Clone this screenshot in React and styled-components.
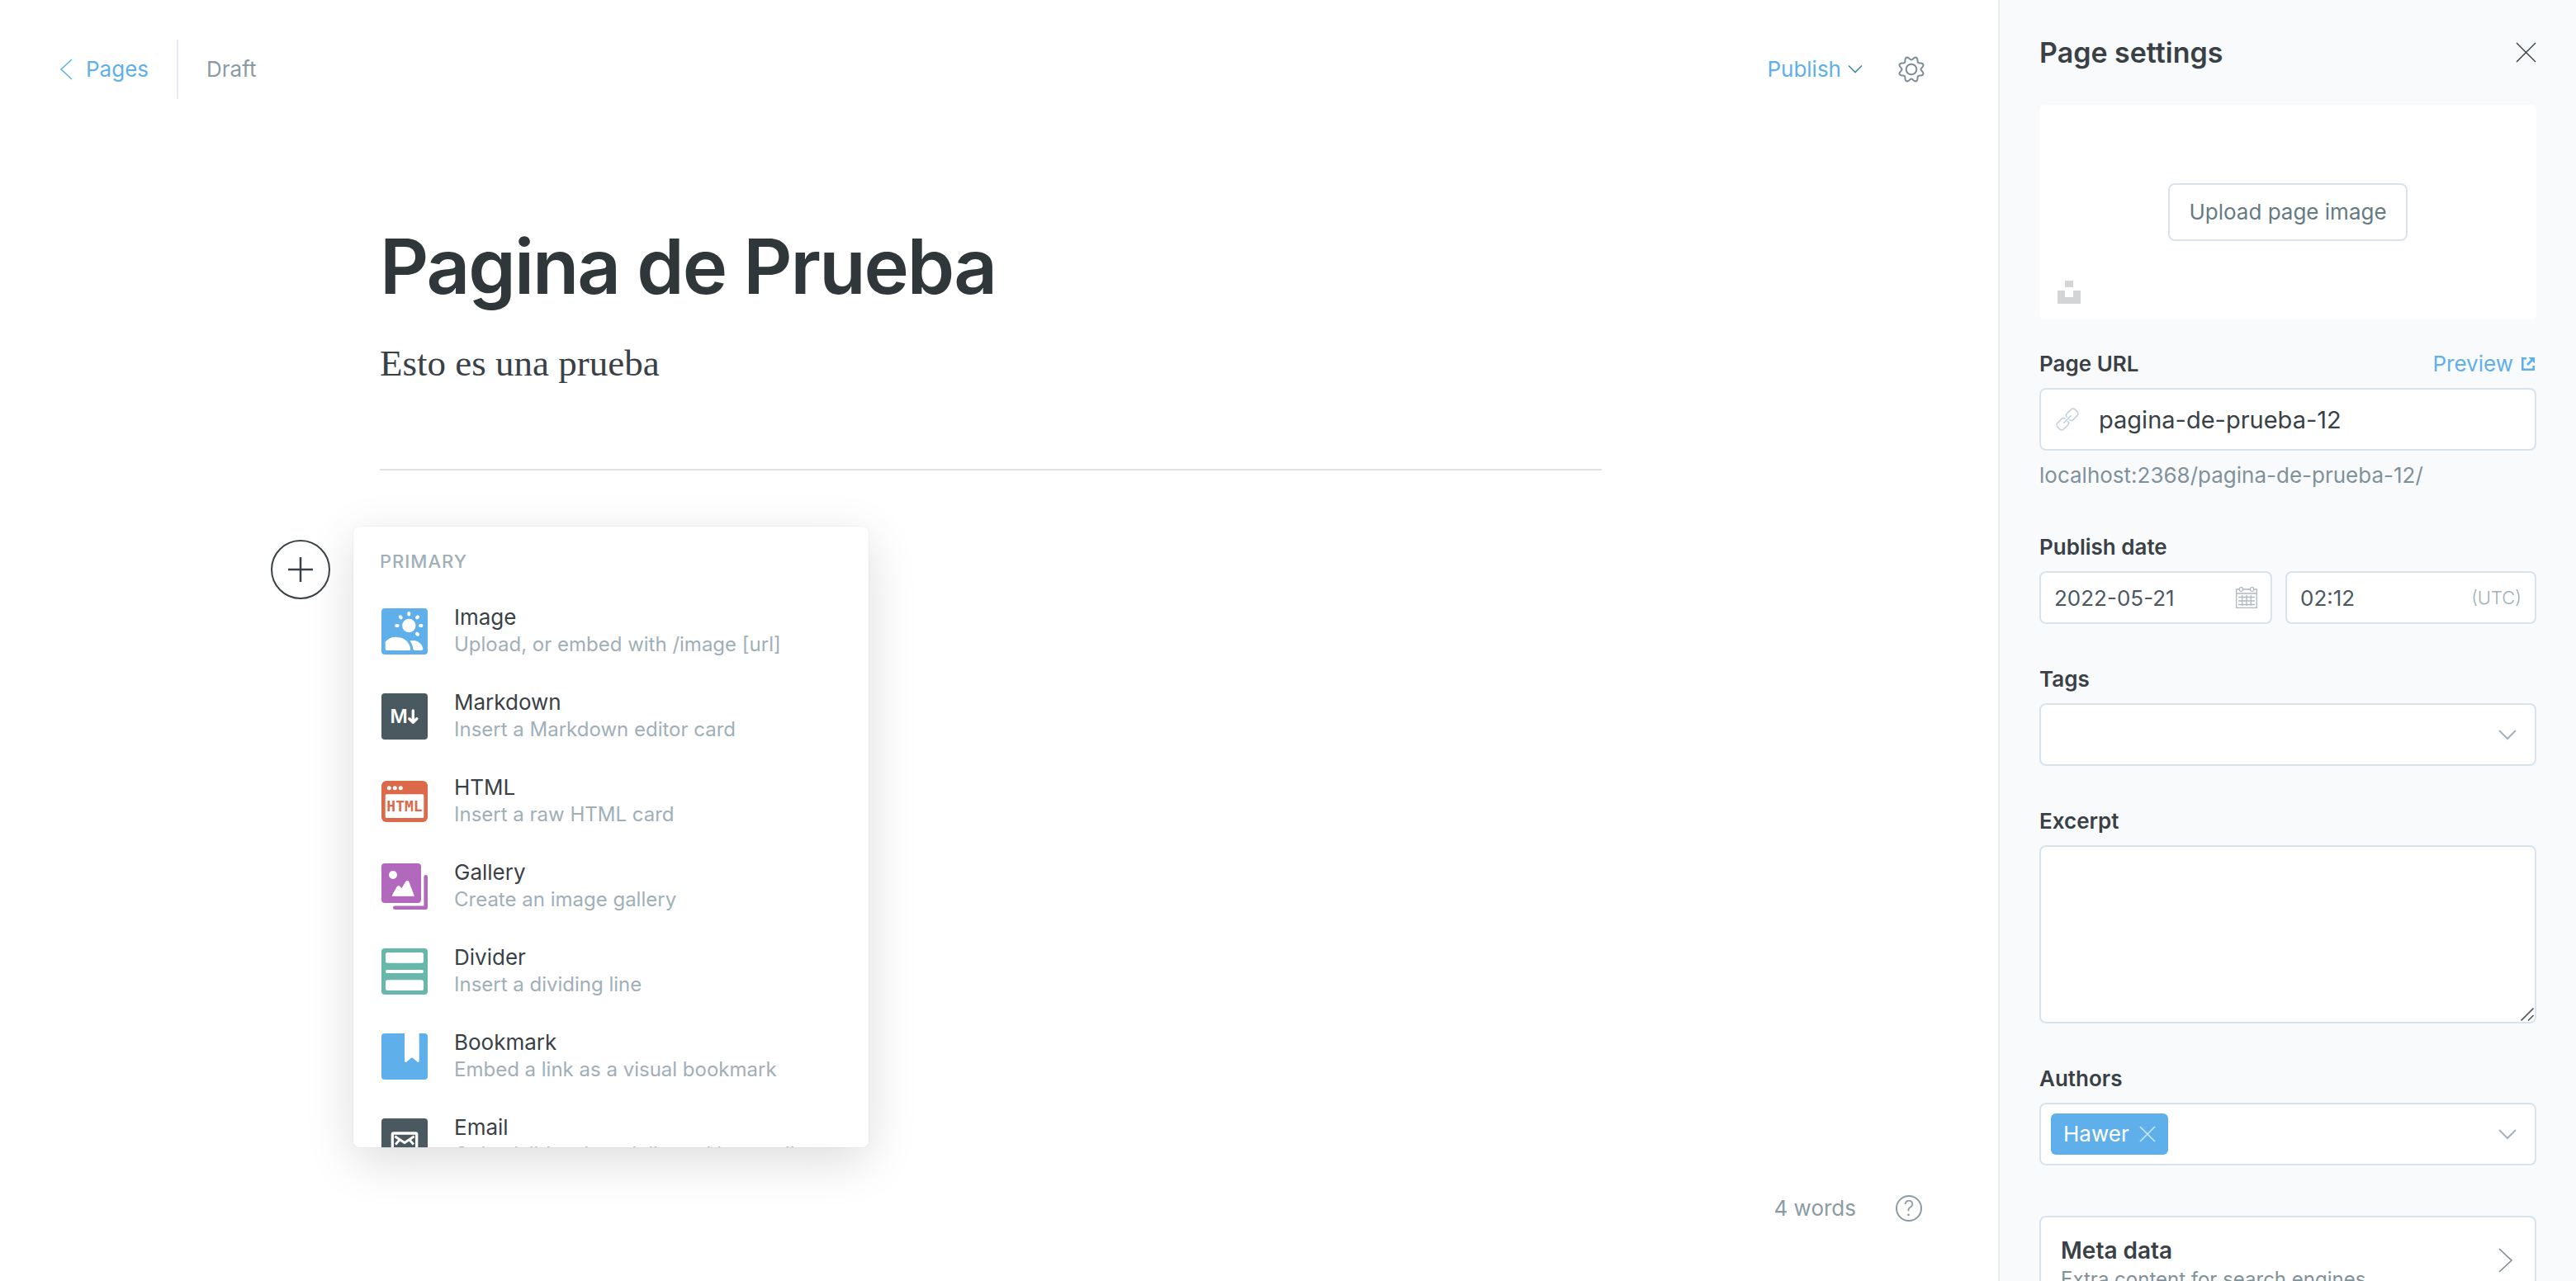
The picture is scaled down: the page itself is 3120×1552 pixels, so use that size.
import React from "react";
import styled, { createGlobalStyle } from "styled-components";

const color = {
  blue: "#5fb0ea",
  ink: "#394146",
  title: "#30373b",
  slate: "#4a585f",
  body: "#667a84",
  mid: "#7f919b",
  soft: "#8b9ba4",
  faint: "#a0afb8",
  line: "#d9e3eb",
  edge: "#e5ebf0",
  panel: "#f9fafc",
};

const GlobalStyle = createGlobalStyle`
  *, *::before, *::after { box-sizing: border-box; }
  body {
    margin: 0;
    background: #fff;
    color: ${color.ink};
    font-family: Inter, "Liberation Sans", sans-serif;
    font-size: 26px;
    line-height: 32px;
  }
  button, input, textarea, select {
    margin: 0;
    padding: 0;
    border: 0;
    background: none;
    font: inherit;
    color: inherit;
    outline: 0;
  }
  button { cursor: pointer; }
  svg { display: block; flex: none; }
`;

const Screen = styled.div`
  display: grid;
  grid-template-columns: minmax(0, 1fr) 700px;
  height: 100vh;
  overflow: hidden;
`;

const Main = styled.main`
  display: flex;
  flex-direction: column;
  min-width: 0;
`;

const TopBar = styled.header`
  display: flex;
  align-items: center;
  justify-content: space-between;
  height: 168px;
  padding: 0 88px 0 72px;
`;

const Cluster = styled.div`
  display: flex;
  align-items: center;
`;

const BackLink = styled.a`
  display: flex;
  align-items: center;
  gap: 16px;
  height: 72px;
  padding-right: 34px;
  border-right: 2px solid ${color.edge};
  color: ${color.blue};
  text-decoration: none;
`;

const Status = styled.span`
  padding-left: 34px;
  color: ${color.soft};
`;

const PublishButton = styled.button`
  display: flex;
  align-items: center;
  gap: 8px;
  margin-right: 42px;
  color: ${color.blue};
`;

const Editor = styled.section`
  width: 100%;
  padding: 96px 20px 0 0;
`;

const Column = styled.div`
  max-width: 1480px;
  margin: 0 auto;
`;

const TitleInput = styled.input`
  display: block;
  width: 100%;
  height: 116px;
  color: ${color.title};
  font-size: 92px;
  font-weight: 600;
  letter-spacing: -2px;
`;

const Paragraph = styled.p`
  margin: 32px 0 0;
  font-family: "Liberation Serif", serif;
  font-size: 45px;
  line-height: 56px;
`;

const Rule = styled.hr`
  height: 2px;
  margin: 100px 0 84px;
  border: 0;
  background: #e0e1e3;
`;

const InsertPoint = styled.div`
  position: relative;
  height: 72px;
`;

const PlusButton = styled.button`
  position: absolute;
  top: 0;
  left: -132px;
  width: 72px;
  height: 72px;
`;

const CardMenu = styled.div`
  position: absolute;
  top: -16px;
  left: -32px;
  width: 624px;
  height: 752px;
  overflow: hidden;
  border-radius: 8px;
  background: #fff;
`;

const MenuShadow = styled.div`
  position: absolute;
  top: -16px;
  left: -32px;
  width: 624px;
  height: 752px;
  border-radius: 8px;
  box-shadow: 0 0 2px rgba(0, 0, 0, 0.1), 0 16px 60px rgba(0, 0, 0, 0.14);
`;

const MenuHeading = styled.h2`
  margin: 26px 0 17px;
  padding: 0 32px;
  color: ${color.faint};
  font-size: 22px;
  font-weight: 500;
  line-height: 32px;
  letter-spacing: 1px;
  text-transform: uppercase;
`;

const MenuItem = styled.button`
  display: flex;
  align-items: center;
  gap: 32px;
  width: 100%;
  height: 103px;
  padding: 0 34px;
  text-align: left;
`;

const ItemText = styled.span`
  display: flex;
  flex-direction: column;
  white-space: nowrap;
`;

const ItemHint = styled.span`
  color: ${color.faint};
  font-size: 24px;
  line-height: 34px;
`;

const Footer = styled.footer`
  display: flex;
  align-items: center;
  justify-content: flex-end;
  gap: 48px;
  margin-top: auto;
  padding: 0 92px 72px 0;
  color: ${color.soft};
`;

const Sidebar = styled.aside`
  padding: 0 48px;
  overflow: hidden;
  border-left: 2px solid ${color.edge};
  background: ${color.panel};
`;

const SidebarHeader = styled.div`
  display: flex;
  align-items: center;
  justify-content: space-between;
  height: 127px;
`;

const SidebarTitle = styled.h1`
  margin: 0;
  font-size: 34px;
  font-weight: 600;
  line-height: 40px;
`;

const ImageDrop = styled.div`
  position: relative;
  display: flex;
  align-items: center;
  justify-content: center;
  height: 260px;
  margin-bottom: 39px;
  border-radius: 6px;
  background: #fff;
`;

const UploadButton = styled.button`
  height: 70px;
  padding: 0 23px;
  border: 2px solid ${color.line};
  border-radius: 8px;
  background: #fff;
  color: ${color.body};
`;

const StockPhotoButton = styled.button`
  position: absolute;
  bottom: 19px;
  left: 22px;
`;

const Group = styled.div`
  margin-bottom: 52px;
`;

const LabelRow = styled.div`
  display: flex;
  align-items: center;
  justify-content: space-between;
  height: 30px;
  margin-bottom: 14px;
`;

const Label = styled.label`
  font-weight: 600;
`;

const PreviewLink = styled.a`
  display: flex;
  align-items: center;
  gap: 10px;
  padding-right: 2px;
  color: ${color.blue};
  text-decoration: none;
`;

const Field = styled.div`
  display: flex;
  align-items: center;
  gap: ${(p) => p.$gap || 0}px;
  min-width: 0;
  height: ${(p) => p.$height || 76}px;
  padding: 0 ${(p) => p.$end || p.$pad || 16}px 0 ${(p) => p.$pad || 16}px;
  border: 2px solid ${color.line};
  border-radius: 8px;
  background: #fff;
`;

const FieldInput = styled.input`
  flex: 1;
  width: 0;
  min-width: 0;
  height: 100%;
  color: ${(p) => (p.$large ? color.ink : color.slate)};
  font-size: ${(p) => (p.$large ? 29 : 26)}px;
`;

const FieldSelect = styled.select`
  flex: 1;
  height: 100%;
  appearance: none;
`;

const Help = styled.p`
  margin: 14px 0 0;
  padding-bottom: 4px;
  color: ${color.mid};
`;

const DateRow = styled.div`
  display: grid;
  grid-template-columns: 282fr 304fr;
  gap: 16px;
`;

const Zone = styled.span`
  color: ${color.faint};
  font-size: 22px;
  font-weight: 300;
`;

const AreaWrap = styled.div`
  position: relative;
`;

const Area = styled.textarea`
  display: block;
  width: 100%;
  height: 216px;
  padding: 16px;
  border: 2px solid ${color.line};
  border-radius: 8px;
  background: #fff;
  resize: none;
`;

const Grip = styled.svg`
  position: absolute;
  right: 3px;
  bottom: 3px;
`;

const Token = styled.span`
  display: flex;
  align-items: center;
  gap: 12px;
  height: 50px;
  padding: 0 15px;
  border-radius: 6px;
  background: ${color.blue};
  color: #fff;
`;

const MetaButton = styled.button`
  display: flex;
  align-items: center;
  justify-content: space-between;
  width: 100%;
  height: 108px;
  margin-top: 61px;
  padding: 0 26px 0 24px;
  border: 2px solid ${color.line};
  border-radius: 8px;
  background: #fff;
  text-align: left;
`;

const MetaText = styled.span`
  display: flex;
  flex-direction: column;
  padding-top: 10px;
`;

const MetaTitle = styled.span`
  font-size: 28px;
  font-weight: 600;
  line-height: 36px;
`;

const MetaHint = styled.span`
  color: ${color.mid};
  font-size: 24px;
  line-height: 34px;
`;

function Stroke({ w, h, d, stroke, width = 2, cap = "butt" }) {
  return (
    <svg width={w} height={h} viewBox={`0 0 ${w} ${h}`} fill="none" stroke={stroke} strokeWidth={width} strokeLinecap={cap} aria-hidden="true">
      <path d={d} />
    </svg>
  );
}

const FieldChevron = () => (
  <Stroke w={22} h={13} d="M1 1l10 10L21 1" stroke="#a3b2bb" />
);

const gearPath = (() => {
  const points = [];
  for (let i = 0; i < 144; i += 1) {
    const a = (i / 144) * Math.PI * 2;
    const wave = Math.cos(8 * (a - Math.PI / 8));
    const r = 13.5 + 2 * wave;
    points.push(`${(17 + r * Math.cos(a)).toFixed(2)} ${(17 + r * Math.sin(a)).toFixed(2)}`);
  }
  return `M${points.join("L")}Z`;
})();

const GearIcon = () => (
  <svg width="34" height="34" viewBox="0 0 34 34" fill="none" stroke="#7a8d97" strokeWidth="2" strokeLinejoin="round" aria-hidden="true">
    <path d={gearPath} />
    <circle cx="17" cy="17" r="6.3" />
  </svg>
);

const LinkIcon = () => (
  <svg width="28" height="28" viewBox="0 0 28 28" fill="none" stroke="#c3d3dd" strokeWidth="1.6" strokeLinecap="round" aria-hidden="true">
    <g transform="rotate(-45 14 14)">
      <path d="M12.500 11.500a3 3 0 0 0-3-2.800H2.500a3.500 3.500 0 0 0-3.500 3.500v3.600a3.500 3.500 0 0 0 3.500 3.500h7a3 3 0 0 0 3-2.800" />
      <path d="M15.500 11.500a3 3 0 0 1 3-2.800h7a3.500 3.500 0 0 1 3.500 3.500v3.600a3.500 3.500 0 0 1-3.500 3.500h-7a3 3 0 0 1-3-2.800" />
      <path d="M8 14h12" />
    </g>
  </svg>
);

const CalendarIcon = () => (
  <svg width="26" height="26" viewBox="0 0 26 26" fill="none" stroke="#aeb9c0" strokeWidth="1.3" aria-hidden="true">
    <path d="M4 3H.7v22.300h24.600V3H22M8.500 3h9M.7 8h24.600" />
    <rect x="4.400" y=".7" width="4" height="4.600" rx="1.500" />
    <rect x="17.600" y=".7" width="4" height="4.600" rx="1.500" />
    <path d="M3 12.500h20M3 17h20M3 21.500h20M7.700 10v13M13 10v13M18.300 10v13" />
  </svg>
);

const ExternalIcon = () => (
  <svg width="16" height="16" viewBox="0 0 16 16" fill="none" stroke={color.blue} strokeWidth="2.600" aria-hidden="true">
    <path d="M6 1.300H1.300v13.400h13.400V10" />
    <path d="M7 9l6-6" />
    <path d="M8.500 0H16v7.500z" fill={color.blue} stroke="none" />
  </svg>
);

const StockPhotoIcon = () => (
  <svg width="28" height="28" viewBox="0 0 28 28" fill="#d3d4d5" aria-hidden="true">
    <path d="M9 0h10v8H9zM0 12h9v8h10v-8h9v16H0z" />
  </svg>
);

const HelpIcon = () => (
  <svg width="32" height="32" viewBox="0 0 32 32" aria-hidden="true">
    <circle cx="16" cy="16" r="15" fill="none" stroke={color.soft} strokeWidth="2" />
    <text x="16" y="25" textAnchor="middle" fontFamily="Inter, sans-serif" fontSize="25" fontWeight="300" fill={color.soft}>?</text>
  </svg>
);

const PlusIcon = () => (
  <svg width="72" height="72" viewBox="0 0 72 72" fill="none" stroke={color.ink} strokeWidth="2" aria-hidden="true">
    <circle cx="36" cy="36" r="35" />
    <path d="M36 21v30M21 36h30" strokeWidth="2.500" />
  </svg>
);

const CardIcon = ({ children }) => (
  <svg width="56" height="56" viewBox="0 0 56 56" fill="#fff" aria-hidden="true">
    {children}
  </svg>
);

const ImageCardIcon = () => (
  <CardIcon>
    <rect width="56" height="56" rx="4" fill={color.blue} />
    <circle cx="33.300" cy="21" r="8.200" />
    <path
      d="M33.300 7.400v-1.400M43 11.300l.9-1M47 21h1.400M43 30.700l.9 1M19.600 21h-1.400M23.700 11.300l-.9-1"
      stroke="#fff" strokeWidth="4" strokeLinecap="round"
    />
    <path d="M4.700 40.500C9 36.300 13 34.700 17 34.700c12 .2 17 7.300 18.300 14.300q.2 2-1.800 2H6.700q-2 0-2-2z" />
    <path d="M34.500 39.500c8.500-2 15 3 15.800 9.500q.1 2-1.800 2h-8q-1.900 0-2.200-2c-.5-3.500-1.500-6.700-3.800-9.500z" />
  </CardIcon>
);

const MarkdownCardIcon = () => (
  <CardIcon>
    <rect width="56" height="56" rx="4" fill={color.slate} />
    <text x="21" y="36" textAnchor="middle" fontFamily="Inter, sans-serif" fontSize="23" fontWeight="600">M</text>
    <path d="M38.300 21v14M33.800 30.800l4.500 4.400 4.500-4.400" fill="none" stroke="#fff" strokeWidth="3.400" strokeLinecap="round" strokeLinejoin="round" />
  </CardIcon>
);

const HtmlCardIcon = () => (
  <CardIcon>
    <rect y="3" width="56" height="50" rx="6" fill="#db694a" />
    <rect x="4.700" y="19.300" width="46.600" height="28.700" rx="1.500" />
    <circle cx="9.300" cy="11.700" r="2.500" />
    <circle cx="16.300" cy="11.700" r="2.500" />
    <circle cx="23.300" cy="11.700" r="2.500" />
    <text x="28" y="40" textAnchor="middle" fontFamily="'DejaVu Sans Mono', monospace" fontSize="18" fontWeight="700" fill="#db694a">HTML</text>
  </CardIcon>
);

const GalleryCardIcon = () => (
  <CardIcon>
    <rect width="48" height="48" rx="4" fill="#b268bd" />
    <circle cx="14" cy="14" r="5" />
    <path d="M13 39.300l6.500-11.500 2-.2 3 3.200 5.500-9 2.500-.2L39.300 39.300z" stroke="#fff" strokeLinejoin="round" />
    <path d="M53.700 16.300v37.400H16.300" fill="none" stroke="#b268bd" strokeWidth="4.600" strokeLinecap="round" strokeLinejoin="round" />
  </CardIcon>
);

const DividerCardIcon = () => (
  <CardIcon>
    <rect width="56" height="56" rx="4" fill="#67b8aa" />
    <rect x="5" y="5" width="46" height="12.700" rx="2.500" />
    <rect x="5" y="26" width="46" height="4" rx="2" />
    <rect x="5" y="38.300" width="46" height="12.700" rx="2.500" />
  </CardIcon>
);

const BookmarkCardIcon = () => (
  <CardIcon>
    <rect width="56" height="56" rx="4" fill={color.blue} />
    <path d="M28 0h17.700v33.500q-.5 2.200-2.300 1L38 29.800q-1-.8-2 0l-5.500 4.700q-2 1.200-2.500-1z" />
  </CardIcon>
);

const EmailCardIcon = () => (
  <CardIcon>
    <rect width="56" height="56" rx="4" fill={color.slate} />
    <g fill="none" stroke="#fff" strokeWidth="3.300" strokeLinecap="square">
      <rect x="13.300" y="18" width="29.400" height="22" rx="1.500" />
      <path d="M17.500 22.500L28 29.500l10.500-7M22 26l-4 4.500M34 26l4 4.500" strokeWidth="2.800" />
    </g>
  </CardIcon>
);

const cards = [
  { name: "Image", hint: "Upload, or embed with /image [url]", Icon: ImageCardIcon },
  { name: "Markdown", hint: "Insert a Markdown editor card", Icon: MarkdownCardIcon },
  { name: "HTML", hint: "Insert a raw HTML card", Icon: HtmlCardIcon },
  { name: "Gallery", hint: "Create an image gallery", Icon: GalleryCardIcon },
  { name: "Divider", hint: "Insert a dividing line", Icon: DividerCardIcon },
  { name: "Bookmark", hint: "Embed a link as a visual bookmark", Icon: BookmarkCardIcon },
  { name: "Email", hint: "Only visible when delivered by email", Icon: EmailCardIcon },
];

function EditorPane() {
  return (
    <Main>
      <TopBar>
        <Cluster>
          <BackLink href="#pages">
            <Stroke w={16} h={26} d="M15 1L2 13l13 12" stroke={color.blue} width={1.6} />
            Pages
          </BackLink>
          <Status>Draft</Status>
        </Cluster>
        <Cluster>
          <PublishButton type="button">
            Publish
            <Stroke w={18} h={12} d="M1 1.500l8 8 8-8" stroke="#4c86a8" width={1.6} />
          </PublishButton>
          <button type="button" aria-label="Settings">
            <GearIcon />
          </button>
        </Cluster>
      </TopBar>
      <Editor>
        <Column>
          <TitleInput type="text" aria-label="Page title" defaultValue="Pagina de Prueba" />
          <Paragraph>Esto es una prueba</Paragraph>
          <Rule />
          <InsertPoint>
            <MenuShadow />
            <PlusButton type="button" aria-label="Add a card">
              <PlusIcon />
            </PlusButton>
            <CardMenu>
              <MenuHeading>Primary</MenuHeading>
              {cards.map(({ name, hint, Icon }) => (
                <MenuItem type="button" key={name}>
                  <Icon />
                  <ItemText>
                    <span>{name}</span>
                    <ItemHint>{hint}</ItemHint>
                  </ItemText>
                </MenuItem>
              ))}
            </CardMenu>
          </InsertPoint>
        </Column>
      </Editor>
      <Footer>
        <span>4 words</span>
        <button type="button" aria-label="Help">
          <HelpIcon />
        </button>
      </Footer>
    </Main>
  );
}

function SettingsPane() {
  return (
    <Sidebar>
      <SidebarHeader>
        <SidebarTitle>Page settings</SidebarTitle>
        <button type="button" aria-label="Close">
          <Stroke w={25} h={25} d="M1 1l23 23M24 1L1 24" stroke={color.ink} width={1.4} />
        </button>
      </SidebarHeader>
      <ImageDrop>
        <UploadButton type="button">Upload page image</UploadButton>
        <StockPhotoButton type="button" aria-label="Choose a stock photo">
          <StockPhotoIcon />
        </StockPhotoButton>
      </ImageDrop>
      <Group>
        <LabelRow>
          <Label htmlFor="url">Page URL</Label>
          <PreviewLink href="#preview">
            Preview
            <ExternalIcon />
          </PreviewLink>
        </LabelRow>
        <Field $gap={24} $pad={18}>
          <LinkIcon />
          <FieldInput id="url" type="text" $large defaultValue="pagina-de-prueba-12" />
        </Field>
        <Help>localhost:2368/pagina-de-prueba-12/</Help>
      </Group>
      <Group>
        <LabelRow>
          <Label htmlFor="date">Publish date</Label>
        </LabelRow>
        <DateRow>
          <Field $height={64}>
            <FieldInput id="date" type="text" defaultValue="2022-05-21" />
            <CalendarIcon />
          </Field>
          <Field $height={64}>
            <FieldInput type="text" aria-label="Publish time" defaultValue="02:12" />
            <Zone>(UTC)</Zone>
          </Field>
        </DateRow>
      </Group>
      <Group>
        <LabelRow>
          <Label htmlFor="tags">Tags</Label>
        </LabelRow>
        <Field $pad={22}>
          <FieldSelect id="tags" defaultValue="">
            <option value="" />
          </FieldSelect>
          <FieldChevron />
        </Field>
      </Group>
      <Group>
        <LabelRow>
          <Label htmlFor="excerpt">Excerpt</Label>
        </LabelRow>
        <AreaWrap>
          <Area id="excerpt" />
          <Grip width="16" height="16" viewBox="0 0 16 16" fill="none" stroke="#55585a" strokeWidth="1.6" aria-hidden="true">
            <path d="M.5 15.500l15-15M9 15.500L15.500 9" />
          </Grip>
        </AreaWrap>
      </Group>
      <LabelRow>
        <Label htmlFor="authors">Authors</Label>
      </LabelRow>
      <Field $pad={12} $end={22}>
        <Token>
          Hawer
          <button type="button" aria-label="Remove Hawer">
            <Stroke w={20} h={20} d="M1 1l18 18M19 1L1 19" stroke="#cfe7f9" width={1.6} />
          </button>
        </Token>
        <FieldInput id="authors" type="text" />
        <button type="button" aria-label="Show authors">
          <FieldChevron />
        </button>
      </Field>
      <MetaButton type="button">
        <MetaText>
          <MetaTitle>Meta data</MetaTitle>
          <MetaHint>Extra content for search engines</MetaHint>
        </MetaText>
        <Stroke w={18} h={30} d="M1 1l15 14L1 29" stroke="#7a8d97" width={1.6} />
      </MetaButton>
    </Sidebar>
  );
}

export default function App() {
  return (
    <>
      <GlobalStyle />
      <Screen>
        <EditorPane />
        <SettingsPane />
      </Screen>
    </>
  );
}
